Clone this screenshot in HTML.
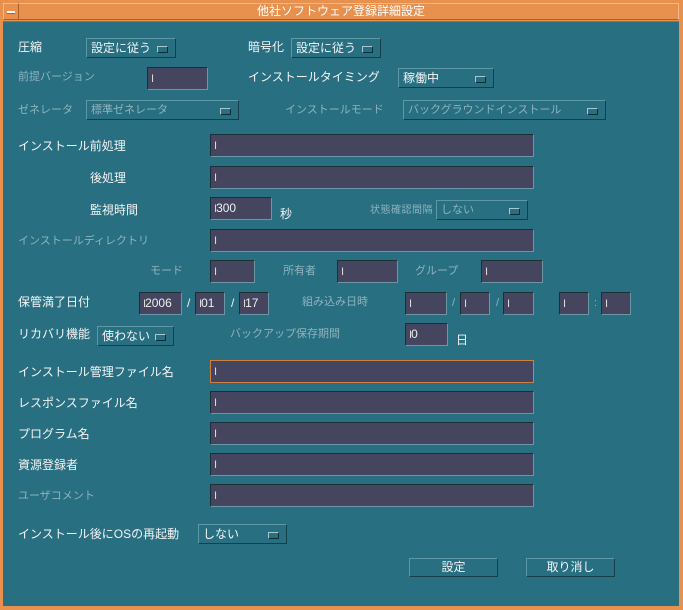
<!DOCTYPE html>
<html><head><meta charset="utf-8"><style>
*{margin:0;padding:0;box-sizing:border-box}
body{width:683px;height:610px;background:#e8904e;position:relative;overflow:hidden;font-family:"Liberation Sans","Noto Sans CJK JP",sans-serif;font-size:12px;color:#f4f4f4}
#body{position:absolute;left:3px;top:21px;width:676px;height:585px;background:#276f81;border-top:1px solid #4a8796}
#title{position:absolute;left:3px;top:3px;width:676px;height:17px;background:#e8904e;border:1px solid #f3b98a;border-bottom-color:#a8602e;text-align:center;line-height:15px;color:#fff;font-size:12px}
#mb{position:absolute;left:3px;top:3px;width:16px;height:17px;border:1px solid #f3b98a;border-right-color:#a8602e;border-bottom-color:#a8602e}
#mb:after{content:"";position:absolute;left:3px;top:7px;width:8px;height:2px;background:#fff;box-shadow:0 1px 0 #a8602e}
.l{position:absolute;white-space:nowrap;line-height:14px}
.d{color:#8fb3bd;font-size:11px}
.i{position:absolute;background:#46455f;border:1px solid #1b2f36;border-right-color:#6a97a3;border-bottom-color:#6a97a3;height:23px;line-height:21px;padding-left:3px;color:#eee;font-size:12px}
.i:before{content:"I";color:#ddd;font-size:11px;margin-right:-1px}
.b{position:absolute;border:1px solid #5d98a7;border-right-color:#163f4a;border-bottom-color:#163f4a;height:20px;line-height:18px;padding-left:4px;background:#276f81;white-space:nowrap}
.o:after{content:"";position:absolute;right:7px;top:7px;width:9px;height:5px;background:#276f81;border:1px solid #a8c8d0;border-right-color:#0e2d35;border-bottom-color:#0e2d35}
.pb{position:absolute;border:1px solid #5d98a7;border-right-color:#163f4a;border-bottom-color:#163f4a;height:19px;line-height:17px;text-align:center;background:#276f81}
</style></head><body>
<div id="title">他社ソフトウェア登録詳細設定</div>
<div id="mb"></div>
<div id="body"></div>

<div class="l" style="left:18px;top:40px">圧縮</div>
<div class="b o" style="left:86px;top:38px;width:90px">設定に従う</div>
<div class="l" style="left:248px;top:40px">暗号化</div>
<div class="b o" style="left:291px;top:38px;width:90px">設定に従う</div>

<div class="l d" style="left:18px;top:70px">前提バージョン</div>
<div class="i" style="left:147px;top:67px;width:61px"></div>
<div class="l" style="left:248px;top:70px">インストールタイミング</div>
<div class="b o" style="left:398px;top:68px;width:96px">稼働中</div>

<div class="l d" style="left:18px;top:103px">ゼネレータ</div>
<div class="b o d" style="left:86px;top:100px;width:153px">標準ゼネレータ</div>
<div class="l d" style="left:285px;top:103px">インストールモード</div>
<div class="b o d" style="left:403px;top:100px;width:203px">バックグラウンドインストール</div>

<div class="l" style="left:18px;top:139px">インストール前処理</div>
<div class="i" style="left:210px;top:134px;width:324px"></div>
<div class="l" style="left:90px;top:171px">後処理</div>
<div class="i" style="left:210px;top:166px;width:324px"></div>
<div class="l" style="left:90px;top:203px">監視時間</div>
<div class="i" style="left:210px;top:197px;width:62px">300</div>
<div class="l" style="left:280px;top:207px">秒</div>
<div class="l d" style="left:370px;top:204px;font-size:10px;letter-spacing:0.5px">状態確認間隔</div>
<div class="b o d" style="left:436px;top:200px;width:92px">しない</div>

<div class="l d" style="left:18px;top:234px">インストールディレクトリ</div>
<div class="i" style="left:210px;top:229px;width:324px"></div>

<div class="l d" style="left:150px;top:264px">モード</div>
<div class="i" style="left:210px;top:260px;width:45px"></div>
<div class="l d" style="left:283px;top:264px">所有者</div>
<div class="i" style="left:337px;top:260px;width:61px"></div>
<div class="l d" style="left:415px;top:264px">グループ</div>
<div class="i" style="left:481px;top:260px;width:62px"></div>

<div class="l" style="left:18px;top:295px">保管満了日付</div>
<div class="i" style="left:139px;top:292px;width:43px">2006</div>
<div class="l" style="left:187px;top:296px">/</div>
<div class="i" style="left:195px;top:292px;width:30px">01</div>
<div class="l" style="left:231px;top:296px">/</div>
<div class="i" style="left:239px;top:292px;width:30px">17</div>
<div class="l d" style="left:302px;top:295px">組み込み日時</div>
<div class="i" style="left:405px;top:292px;width:42px"></div>
<div class="l d" style="left:452px;top:296px">/</div>
<div class="i" style="left:460px;top:292px;width:30px"></div>
<div class="l d" style="left:496px;top:296px">/</div>
<div class="i" style="left:503px;top:292px;width:31px"></div>
<div class="i" style="left:559px;top:292px;width:30px"></div>
<div class="l d" style="left:594px;top:296px">:</div>
<div class="i" style="left:601px;top:292px;width:30px"></div>

<div class="l" style="left:18px;top:327px">リカバリ機能</div>
<div class="b o" style="left:97px;top:326px;width:77px">使わない</div>
<div class="l d" style="left:230px;top:327px">バックアップ保存期間</div>
<div class="i" style="left:405px;top:323px;width:43px">0</div>
<div class="l" style="left:456px;top:333px">日</div>

<div class="l" style="left:18px;top:365px">インストール管理ファイル名</div>
<div class="i" style="left:210px;top:360px;width:324px;border:1px solid #d08040"></div>
<div class="l" style="left:18px;top:396px">レスポンスファイル名</div>
<div class="i" style="left:210px;top:391px;width:324px"></div>
<div class="l" style="left:18px;top:427px">プログラム名</div>
<div class="i" style="left:210px;top:422px;width:324px"></div>
<div class="l" style="left:18px;top:458px">資源登録者</div>
<div class="i" style="left:210px;top:453px;width:324px"></div>
<div class="l d" style="left:18px;top:489px">ユーザコメント</div>
<div class="i" style="left:210px;top:484px;width:324px"></div>

<div class="l" style="left:18px;top:527px">インストール後にOSの再起動</div>
<div class="b o" style="left:198px;top:524px;width:89px">しない</div>

<div class="pb" style="left:409px;top:558px;width:89px">設定</div>
<div class="pb" style="left:526px;top:558px;width:89px">取り消し</div>
</body></html>
